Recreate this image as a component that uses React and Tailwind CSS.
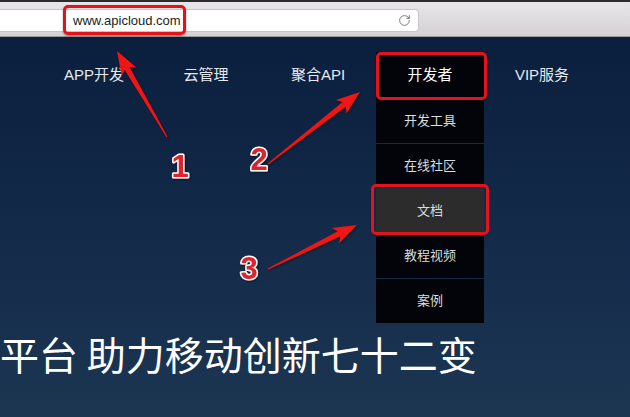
import { RotateCw } from 'lucide-react'

const navItems = ['APP开发', '云管理', '聚合API', '开发者', 'VIP服务']
const devMenu = ['开发工具', '在线社区', '文档', '教程视频', '案例']

const arrows = [
  { tail: [167, 137], tip: [117, 51] },
  { tail: [268, 164], tip: [360, 92] },
  { tail: [268, 269], tip: [357, 225] },
]

const labels = [
  { n: '1', x: 180, y: 177 },
  { n: '2', x: 259, y: 170 },
  { n: '3', x: 249, y: 279 },
]

function arrowPoints([tx, ty], [px, py]) {
  const len = Math.hypot(px - tx, py - ty)
  const dx = (px - tx) / len
  const dy = (py - ty) / len
  const nx = -dy
  const ny = dx
  const bx = px - dx * 20
  const by = py - dy * 20
  const wx = px - dx * 24
  const wy = py - dy * 24
  const pts = [
    [tx + nx * 0.6, ty + ny * 0.6],
    [bx + nx * 2.8, by + ny * 2.8],
    [wx + nx * 8.5, wy + ny * 8.5],
    [px, py],
    [wx - nx * 8.5, wy - ny * 8.5],
    [bx - nx * 2.8, by - ny * 2.8],
    [tx - nx * 0.6, ty - ny * 0.6],
  ]
  return pts.map((p) => p.join(',')).join(' ')
}

function Toolbar() {
  return (
    <div className="h-[37px] border-t-2 border-[#2c2c2c] border-b border-b-[#9a9a9a] bg-gradient-to-b from-[#e8e6e8] to-[#d3d1d3] pt-[7px]">
      <div className="flex h-[23px] w-[419px] items-center justify-between rounded-r-[4px] border border-l-0 border-[#c6c6c6] bg-white pl-[73px] pr-[7px]">
        <span className="text-[13px] text-[#222] [font-family:'Liberation_Sans',sans-serif]">
          www.apicloud.com
        </span>
        <RotateCw size={13} strokeWidth={1.6} className="text-[#6a6a6a]" />
      </div>
    </div>
  )
}

function Nav() {
  return (
    <div className="flex pl-[38px] pt-[15px]">
      {navItems.map((item) =>
        item === '开发者' ? (
          <div key={item} className="relative flex w-[112px] justify-center">
            <div className="flex h-[46px] w-[108px] items-center justify-center bg-[#02040a] text-[15px] text-white">
              {item}
            </div>
            <div className="absolute left-[2px] top-[46px] w-[108px] bg-[#02040a] text-[13px] text-[#dcdcdc]">
              {devMenu.map((m, i) => (
                <div
                  key={m}
                  className={`flex h-[45px] items-center justify-center ${
                    i > 0 ? 'border-t border-[#1b2a42]' : ''
                  } ${m === '文档' ? 'bg-[#2c2c2c]' : ''}`}
                >
                  {m}
                </div>
              ))}
            </div>
          </div>
        ) : (
          <div
            key={item}
            className="flex h-[46px] w-[112px] items-center justify-center text-[15px] text-[#e6eaf0]"
          >
            {item}
          </div>
        )
      )}
    </div>
  )
}

function Annotations() {
  return (
    <div className="pointer-events-none absolute inset-0">
      {/* red boxes */}
      <div className="absolute left-[63px] top-[5px] h-[30px] w-[123px] rounded-[5px] border-[3px] border-[#e5121a] shadow-[0_1px_2px_rgba(0,0,0,0.4)]" />
      <div className="absolute left-[376px] top-[52px] h-[48px] w-[111px] rounded-[5px] border-[3px] border-[#e5121a] shadow-[0_1px_2px_rgba(0,0,0,0.4)]" />
      <div className="absolute left-[371px] top-[184px] h-[51px] w-[118px] rounded-[5px] border-[3px] border-[#e5121a] shadow-[0_1px_2px_rgba(0,0,0,0.4)]" />

      <svg width="630" height="417" className="absolute left-0 top-0">
        <defs>
          <filter id="sh" x="-20%" y="-20%" width="140%" height="140%">
            <feDropShadow dx="1" dy="1" stdDeviation="0.8" floodColor="#000" floodOpacity="0.5" />
          </filter>
        </defs>
        {arrows.map((a, i) => (
          <polygon key={i} points={arrowPoints(a.tail, a.tip)} fill="#f01414" filter="url(#sh)" />
        ))}
        {labels.map((l) => (
          <text
            key={l.n}
            x={l.x}
            y={l.y}
            textAnchor="middle"
            fontSize="31"
            fontWeight="900"
            fontFamily="'Liberation Sans', sans-serif"
            fill="#e0202a"
            stroke="#fff"
            strokeWidth="3"
            paintOrder="stroke"
            strokeLinejoin="round"
            filter="url(#sh)"
          >
            {l.n}
          </text>
        ))}
      </svg>
    </div>
  )
}

export default function App() {
  return (
    <div className="relative flex h-[417px] w-[630px] flex-col overflow-hidden [font-family:'Liberation_Sans','Noto_Sans_CJK_SC',sans-serif]">
      <Toolbar />
      <div className="flex-1 bg-gradient-to-b from-[#0b1e3d] via-[#132a49] to-[#1c3652]">
        <Nav />
        <h1 className="mt-[236px] whitespace-nowrap text-[39px] leading-[39px] text-white [font-family:'Noto_Sans_CJK_SC',sans-serif]">
          平台 助力移动创新七十二变
        </h1>
      </div>
      <Annotations />
    </div>
  )
}
